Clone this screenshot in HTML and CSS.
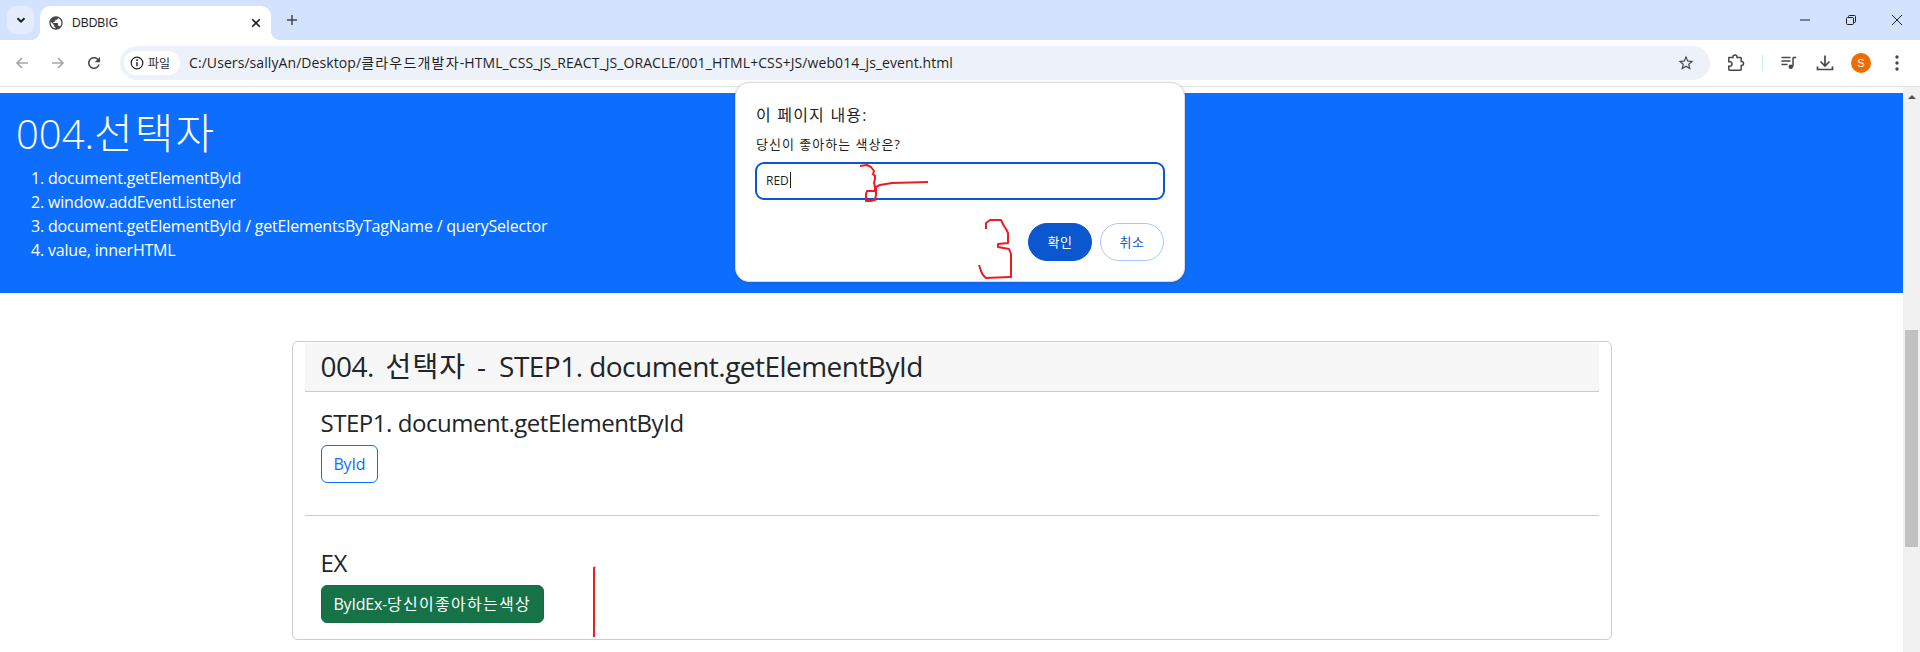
FILE: index.html
```html
<!DOCTYPE html>
<html lang="ko">
<head>
<meta charset="utf-8">
<title>DBDBIG</title>
<link rel="stylesheet" href="styles.css">
</head>
<body>
<div class="window">
  <header class="tabstrip">
    <button class="tabsearch"><svg class="i12" viewBox="0 0 12 12"><path d="M2.5 4.2 6 7.7l3.5-3.5" fill="none" stroke="#1f1f1f" stroke-width="2"/></svg></button>
    <div class="tab">
      <svg class="i16 globe" viewBox="0 0 24 24"><path fill="#45474a" d="M12 2C6.48 2 2 6.48 2 12s4.48 10 10 10 10-4.48 10-10S17.52 2 12 2zm-1 17.93c-3.95-.49-7-3.85-7-7.93 0-.62.08-1.21.21-1.79L9 15v1c0 1.1.9 2 2 2v1.93zm6.9-2.54c-.26-.81-1-1.39-1.9-1.39h-1v-3c0-.55-.45-1-1-1H8v-2h2c.55 0 1-.45 1-1V7h2c1.1 0 2-.9 2-2v-.41c2.93 1.19 5 4.06 5 7.41 0 2.08-.8 3.97-2.1 5.39z"/></svg>
      <span class="tabtitle">DBDBIG</span>
      <svg class="i12 tabclose" viewBox="0 0 12 12"><path d="M2.2 2.2l7.6 7.6M9.8 2.2 2.2 9.8" stroke="#1f1f1f" stroke-width="1.6" fill="none"/></svg>
    </div>
    <svg class="i12 newtab" viewBox="0 0 12 12"><path d="M6 1v10M1 6h10" stroke="#444746" stroke-width="1.5" fill="none"/></svg>
    <div class="winctrls">
      <svg class="i12" viewBox="0 0 12 12"><path d="M1 6h10" stroke="#1f1f1f" stroke-width="1" fill="none"/></svg>
      <svg class="i12" viewBox="0 0 12 12"><path d="M1.5 4.5a1 1 0 0 1 1-1h5a1 1 0 0 1 1 1v5a1 1 0 0 1-1 1h-5a1 1 0 0 1-1-1zM3.5 3.5v-1a1 1 0 0 1 1-1h5a1 1 0 0 1 1 1v5a1 1 0 0 1-1 1h-1" stroke="#1f1f1f" stroke-width="1" fill="none"/></svg>
      <svg class="i12" viewBox="0 0 12 12"><path d="M1 1l10 10M11 1 1 11" stroke="#1f1f1f" stroke-width="1" fill="none"/></svg>
    </div>
  </header>

  <nav class="toolbar">
    <svg class="i16 nav-back" viewBox="0 0 16 16"><path d="M14 8H3M8 3 3 8l5 5" stroke="#a4a6a8" stroke-width="1.6" fill="none"/></svg>
    <svg class="i16 nav-fwd" viewBox="0 0 16 16"><path d="M2 8h11M8 3l5 5-5 5" stroke="#a4a6a8" stroke-width="1.6" fill="none"/></svg>
    <svg class="i18 nav-reload" viewBox="0 0 24 24"><path fill="#45474a" d="M17.65 6.35C16.2 4.9 14.21 4 12 4c-4.42 0-7.99 3.58-7.99 8s3.57 8 7.99 8c3.73 0 6.84-2.55 7.73-6h-2.08c-.82 2.33-3.04 4-5.65 4-3.31 0-6-2.69-6-6s2.69-6 6-6c1.66 0 3.14.69 4.22 1.78L13 11h7V4l-2.35 2.35z"/></svg>
    <div class="omnibox">
      <div class="chip">
        <svg class="i14" viewBox="0 0 14 14"><circle cx="7" cy="7" r="5.8" fill="none" stroke="#1f1f1f" stroke-width="1.2"/><path d="M7 6v4.2" stroke="#1f1f1f" stroke-width="1.4"/><circle cx="7" cy="4.2" r=".9" fill="#1f1f1f"/></svg>
        <span>파일</span>
      </div>
      <span class="url">C:/Users/sallyAn/Desktop/<span class="ko-url">클라우드개발자</span>-HTML_CSS_JS_REACT_JS_ORACLE/001_HTML+CSS+JS/web014_js_event.html</span>
      <svg class="i18 star" viewBox="0 0 24 24"><path fill="#45474a" d="M22 9.24l-7.19-.62L12 2 9.19 8.63 2 9.24l5.46 4.73L5.82 21 12 17.27 18.18 21l-1.63-7.03L22 9.24zM12 15.4l-3.76 2.27 1-4.28-3.32-2.88 4.38-.38L12 6.1l1.71 4.04 4.38.38-3.32 2.88 1 4.28L12 15.4z"/></svg>
    </div>
    <div class="tools">
      <svg class="i18 t-ext" viewBox="0 0 18 18"><path d="M2 3.5h4V3a2 2 0 0 1 4 0v.5h3.5a.7.7 0 0 1 .7.7V7.5h.3a2 2 0 0 1 0 4h-.3v4a.7.7 0 0 1-.7.7H2.5a.7.7 0 0 1-.7-.7v-3.3h1a2.2 2.2 0 0 0 0-4.4h-1V4.2z" stroke="#45474a" stroke-width="1.5" fill="none"/></svg>
      <span class="divider"></span>
      <svg class="i18 t-media" viewBox="0 0 18 18"><path d="M1.5 3.5h9M1.5 7h9M1.5 10.5h6" stroke="#45474a" stroke-width="1.4" fill="none"/><path d="M13 3.5v9" stroke="#45474a" stroke-width="1.5" fill="none"/><path d="M13 3.5h3" stroke="#45474a" stroke-width="1.6" fill="none"/><circle cx="10.8" cy="12.8" r="2.3" fill="#45474a"/></svg>
      <svg class="i18 t-down" viewBox="0 0 18 18"><path d="M9 1.5v10M4.5 7.5 9 12l4.5-4.5" stroke="#45474a" stroke-width="1.7" fill="none"/><path d="M1.5 12.5v3h15v-3" stroke="#45474a" stroke-width="1.7" fill="none"/></svg>
      <span class="avatar">S</span>
      <svg class="i18 t-more" viewBox="0 0 18 18"><circle cx="9" cy="3" r="1.7" fill="#45474a"/><circle cx="9" cy="9" r="1.7" fill="#45474a"/><circle cx="9" cy="15" r="1.7" fill="#45474a"/></svg>
    </div>
  </nav>

  <div class="viewport">
    <main class="page">
      <section class="hero">
        <h1 class="hero-title">004.<span class="ko-h1">선택자</span></h1>
        <ol class="hero-list">
          <li>document.getElementById</li>
          <li>window.addEventListener</li>
          <li>document.getElementById / getElementsByTagName / querySelector</li>
          <li>value, innerHTML</li>
        </ol>
      </section>
      <section class="container">
        <div class="card">
          <h3 class="card-header">004. <span class="ko-h3">선택자</span> <span class="dash">-</span> STEP1. document.getElementById</h3>
          <div class="card-block">
            <h4 class="step">STEP1. document.getElementById</h4>
            <button class="btn btn-outline">ById</button>
          </div>
          <hr class="rule">
          <div class="card-block ex">
            <h4 class="step">EX</h4>
            <button class="btn btn-green">ByIdEx-<span class="ko-btn">당신이좋아하는색상</span></button>
          </div>
        </div>
      </section>
    </main>
    <aside class="scrollbar">
      <span class="sb-arrow"></span>
      <span class="sb-thumb"></span>
    </aside>
  </div>

  <div class="dialog">
    <p class="dlg-title">이 페이지 내용:</p>
    <p class="dlg-msg">당신이 좋아하는 색상은?</p>
    <div class="dlg-input"><span>RED</span><i class="caret"></i></div>
    <div class="dlg-actions">
      <button class="pill pill-ok">확인</button>
      <button class="pill pill-cancel">취소</button>
    </div>
  </div>

  <svg class="scribble" viewBox="0 0 1920 652">
    <g fill="none" stroke="#ed1c24" stroke-width="2" stroke-linejoin="round">
      <path d="M860 166 867 165 871 167 874 171 873 174 875 176 875 179 874 183 875 187 875 191 867 191 866 194 866 201 871 201 875 200 876 195 876 187 880 185 892 183 928 182"/>
      <path d="M986 229V223L990 220H1001L1004 226 1006 229 1008 233V243L998 244V247L1009 249 1011 254V277L1009 277 986 278 983 275 981 271 979 265"/>
      <path d="M594 637V568L595 567"/>
    </g>
  </svg>
</div>
</body>
</html>
```
FILE: styles.css
```css
* { box-sizing: border-box; }
html, body { margin: 0; height: 100%; overflow: hidden; background: #fff; }
body { font-family: "Open Sans", "Noto Sans CJK KR", sans-serif; color: #212529; }
svg { display: block; flex: none; }
button { font: inherit; }
.i12 { width: 12px; height: 12px; }
.i14 { width: 14px; height: 14px; }
.i16 { width: 16px; height: 16px; }
.i18 { width: 18px; height: 18px; }

.window { position: relative; width: 1920px; height: 652px; display: flex; flex-direction: column; overflow: hidden; }

/* tab strip */
.tabstrip { height: 40px; flex: none; background: #d3e3fd; display: flex; align-items: flex-start; padding: 6px 17px 0 7px; }
.tabsearch { width: 27px; height: 28px; border: 0; padding: 0; border-radius: 9px; background: #e4edfd; display: flex; align-items: center; justify-content: center; }
.tab { position: relative; margin-left: 6px; width: 231px; height: 34px; background: #fff; border-radius: 10px 10px 0 0; display: flex; align-items: center; padding: 0 9px 0 8px; }
.tab::before, .tab::after { content: ""; position: absolute; bottom: 0; width: 10px; height: 10px; }
.tab::before { left: -10px; background: radial-gradient(circle at 0 0, transparent 10px, #fff 10.5px); }
.tab::after { right: -10px; background: radial-gradient(circle at 100% 0, transparent 10px, #fff 10.5px); }
.tabtitle { margin-left: 8px; font: 12px/16px "Liberation Sans", sans-serif; color: #1f1f1f; flex: 1; }
.newtab { margin: 8px 0 0 15px; }
.winctrls { margin-left: auto; margin-top: 8px; display: flex; gap: 34px; }

/* toolbar */
.toolbar { position: relative; height: 47px; flex: none; background: #fff; border-radius: 10px 10px 0 0; border-bottom: 1px solid #e3e3e3; display: flex; align-items: flex-start; padding: 6px 13px 0 14px; }
.nav-back { margin-top: 9px; }
.nav-fwd { margin: 9px 0 0 20px; }
.nav-reload { margin: 8px 0 0 19px; }
.omnibox { margin-left: 17px; width: 1590px; height: 34px; border-radius: 17px; background: #edf2fa; display: flex; align-items: center; padding: 0 15px 0 4px; }
.chip { height: 24px; width: 56px; border-radius: 12px; background: #fff; display: flex; align-items: center; gap: 4px; padding-left: 6px; font-size: 12px; color: #1f1f1f; }
.url { margin-left: 9px; flex: 1; font: 14px/18px "Open Sans", "Noto Sans CJK KR", sans-serif; letter-spacing: .08px; color: #1f1f1f; white-space: nowrap; }
.ko-url { letter-spacing: 1.2px; }
.tools { display: flex; align-items: center; height: 34px; margin-left: 17px; }
.divider { width: 1px; height: 16px; background: #d3e3fd; margin: 0 17px 0 17px; }
.t-down { margin-left: 18px; }
.avatar { margin-left: 17px; width: 20px; height: 20px; border-radius: 50%; background: #ef6c00; color: #fff; font: 11px/20px "Liberation Sans", sans-serif; text-align: center; }
.t-more { margin-left: 17px; }

/* page */
.viewport { flex: 1; min-height: 0; display: flex; }
.page { flex: 1; min-width: 0; padding-top: 6px; overflow: hidden; }
.hero { height: 200px; background: #0d6efd; color: #fff; padding: 16px; }
.hero-title { margin: 0 0 8px; font-size: 40px; line-height: 48px; font-weight: 300; }
.ko-h1 { font-size: 42px; font-weight: 300; letter-spacing: .05em; }
.hero-list { margin: 0; padding-left: 32px; font-size: 16px; line-height: 24px; font-weight: 400; letter-spacing: -0.012em; }
.container { width: 1320px; margin: 48px auto 0; }
.card { height: 299px; border: 1px solid #ccc; border-radius: 6px; padding: 0 12px; }
.card-header { margin: 1px 0 0; height: 49px; padding: 0 16px; background: #f7f7f7; border-bottom: 1px solid #ccc; font-size: 28px; line-height: 47px; font-weight: 400; letter-spacing: -0.019em; }
.ko-h3 { letter-spacing: .04em; margin: 0 4px 0 5px; }
.dash { margin-right: 7px; }
.card-block { padding: 16px 16px 0; }
.step { margin: 0 0 8px; font-size: 24px; line-height: 29px; font-weight: 400; letter-spacing: -0.019em; }
.btn { display: block; height: 38px; padding: 0 12px; border-radius: 6px; font-size: 16px; line-height: 36px; border: 1px solid; background: #fff; letter-spacing: -0.014em; }
.btn-outline { border-color: #0d6efd; color: #0d6efd; }
.btn-green { border-color: #146c43; background: #157347; color: #fff; }
.ko-btn { letter-spacing: .08em; }
.rule { margin: 32px 0 0; border: 0; border-top: 1px solid #ccc; }
.card-block.ex { padding-top: 32px; }

/* scrollbar */
.scrollbar { position: relative; width: 17px; flex: none; background: #f1f1f1; padding: 0 2px; display: flex; flex-direction: column; align-items: center; }
.sb-arrow { margin-top: 8px; width: 0; height: 0; border: 4px solid transparent; border-top: 0; border-bottom: 4px solid #505050; }
.sb-thumb { margin-top: 231px; width: 13px; height: 217px; background: #c1c1c1; }

/* dialog */
.dialog { position: absolute; left: 735px; top: 82px; width: 450px; height: 200px; background: #fff; border: 1px solid #dadce0; border-radius: 14px; box-shadow: 0 1px 3px rgba(60,64,67,.3); padding: 21px 19px 0; }
.dlg-title { margin: 0 0 0 1px; font-size: 16px; line-height: 22px; letter-spacing: 1.2px; color: #1f1f1f; }
.dlg-msg { margin: 9px 0 0 1px; font-size: 13px; line-height: 18px; letter-spacing: 1px; color: #1f1f1f; }
.dlg-input { margin-top: 9px; height: 38px; border: 2px solid #0b57d0; border-radius: 9px; display: flex; align-items: center; padding: 0 0 2px 9px; font-size: 12px; color: #1f1f1f; }
.caret { width: 1px; height: 16px; background: #1f1f1f; margin-left: 1px; }
.dlg-actions { margin-top: 23px; display: flex; justify-content: flex-end; gap: 8px; padding-right: 1px; }
.pill { width: 64px; height: 38px; border-radius: 19px; font-size: 13px; letter-spacing: .5px; border: 1px solid; padding: 0 0 2px; }
.pill-ok { background: #0b57d0; border-color: #0b57d0; color: #fff; }
.pill-cancel { background: #fff; border-color: #a8c7fa; color: #0b57d0; }

.scribble { position: absolute; left: 0; top: 0; width: 1920px; height: 652px; pointer-events: none; }
```
